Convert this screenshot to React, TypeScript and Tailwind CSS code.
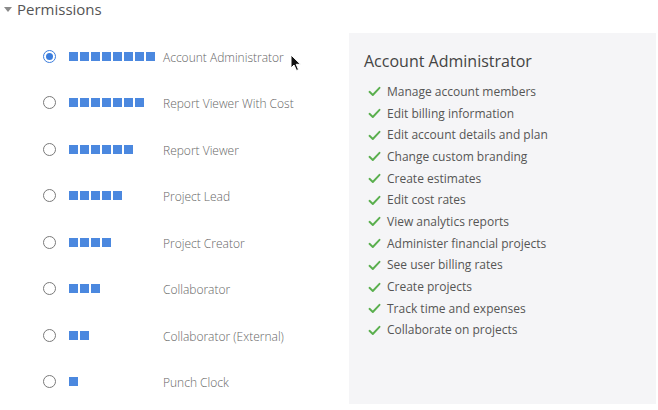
import React from 'react'

const roles = [
  { name: 'Account Administrator', level: 8 },
  { name: 'Report Viewer With Cost', level: 7 },
  { name: 'Report Viewer', level: 6 },
  { name: 'Project Lead', level: 5 },
  { name: 'Project Creator', level: 4 },
  { name: 'Collaborator', level: 3 },
  { name: 'Collaborator (External)', level: 2 },
  { name: 'Punch Clock', level: 1 },
]

const perms = [
  'Manage account members',
  'Edit billing information',
  'Edit account details and plan',
  'Change custom branding',
  'Create estimates',
  'Edit cost rates',
  'View analytics reports',
  'Administer financial projects',
  'See user billing rates',
  'Create projects',
  'Track time and expenses',
  'Collaborate on projects',
]

function Check() {
  return (
    <svg width="13" height="11" viewBox="0 0 13 11" className="shrink-0">
      <path d="M1.5 5.8 L4.8 9 L11.5 1.8" fill="none" stroke="#5aaf4e" strokeWidth="1.9" strokeLinecap="round" strokeLinejoin="round" />
    </svg>
  )
}

function Radio({ checked }: { checked: boolean }) {
  if (checked) {
    return (
      <span className="w-[13px] h-[13px] rounded-full border border-[#3b7ddd] flex items-center justify-center">
        <span className="w-[7px] h-[7px] rounded-full bg-[#3b7ddd]" />
      </span>
    )
  }
  return <span className="w-[13px] h-[13px] rounded-full border border-[#7a7a7a] bg-white" />
}

export default function App() {
  return (
    <div className="w-[658px] h-[410px] bg-white overflow-hidden" style={{ fontFamily: '"Open Sans", sans-serif' }}>
      {/* header */}
      <div className="h-[33px] flex items-start">
        <div className="flex items-center h-[18px] pl-[4px]">
          <svg width="8" height="5" viewBox="0 0 8 5">
            <path d="M0 0 H8 L4 5 Z" fill="#8a8a8a" />
          </svg>
          <span className="ml-[5px] text-[15px] leading-[18px] text-[#555]">Permissions</span>
        </div>
      </div>

      <div className="flex">
        {/* roles */}
        <div className="w-[349px] relative">
          {roles.map((r, i) => (
            <div key={r.name} className="h-[46.5px] flex items-center">
              <div className="w-[43px]" />
              <Radio checked={i === 0} />
              <div className="ml-[13px] w-[94px] flex gap-[2px]">
                {Array.from({ length: r.level }).map((_, j) => (
                  <span key={j} className="w-[9px] h-[9px] bg-[#4b88df]" />
                ))}
              </div>
              <span className="pt-[3px] text-[12px] font-light text-[#666]">{r.name}</span>
            </div>
          ))}
          {/* mouse cursor */}
          <svg className="absolute left-[290px] top-[21px]" width="12" height="18" viewBox="0 0 12 18">
            <path d="M1 1 L1 14 L4 11 L6.5 16.5 L8.5 15.6 L6.2 10.3 L10.5 10.3 Z" fill="#111" stroke="#fff" strokeWidth="1" strokeLinejoin="round" />
          </svg>
        </div>

        {/* detail panel */}
        <div className="w-[307px] h-[371px] bg-[#f5f5f7] pl-[15px] pt-[17px]">
          <div className="text-[16px] leading-[22px] text-[#444]">Account Administrator</div>
          <div className="mt-[9px] flex flex-col">
            {perms.map((p) => (
              <div key={p} className="h-[21.7px] flex items-center pl-[4px]">
                <Check />
                <span className="ml-[6px] text-[12px] text-[#555]">{p}</span>
              </div>
            ))}
          </div>
        </div>
      </div>
    </div>
  )
}
